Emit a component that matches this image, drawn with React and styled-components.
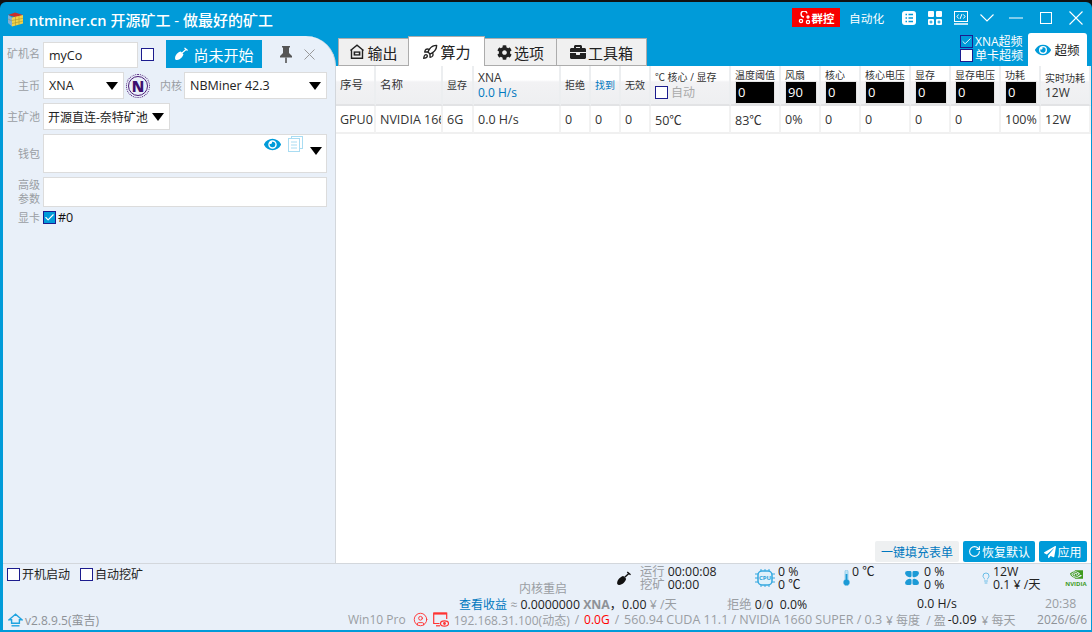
import React from "react";
import styled, { createGlobalStyle } from "styled-components";
import { Rocket, RotateCw, Lightbulb, CircleUser, Check } from "lucide-react";
import { FaCog, FaBriefcase, FaPaperPlane, FaEye } from "react-icons/fa";
import { SiNvidia } from "react-icons/si";

const BLUE = "#009bd9";

const GlobalStyle = createGlobalStyle`
  html, body { margin: 0; padding: 0; background: #111; overflow: hidden; }
  body {
    font-family: "Open Sans", "Noto Sans CJK SC", sans-serif;
    font-size: 12.5px;
    color: #222;
  }
  * { box-sizing: border-box; }
`;

const Window = styled.div`
  width: 1092px;
  height: 630px;
  margin-top: 2px;
  padding: 0 1px 2px 0;
  background: ${BLUE};
  border-radius: 6px 6px 0 0;
  display: flex;
  flex-direction: column;
  overflow: hidden;
`;

const TitleBar = styled.div`
  height: 34px;
  display: flex;
  align-items: center;
  padding-left: 8px;
  color: #fff;
  flex: none;
`;

const AppTitle = styled.div`
  font-size: 15px;
  font-weight: 500;
  margin-left: 6px;
`;

const TitleHost = styled.span`
  font-weight: 600;
  font-size: 14.6px;
`;

const TitleActions = styled.div`
  margin-left: auto;
  display: flex;
  align-items: center;
  padding: 0 8px 3px 0;
`;

const GroupBadge = styled.div`
  width: 48px;
  height: 19px;
  background: #f70000;
  color: #fff;
  font-size: 11.5px;
  font-weight: 600;
  display: flex;
  align-items: center;
  justify-content: center;
  gap: 1px;
  margin-right: 9px;
`;

const AutoLink = styled.div`
  font-size: 11.7px;
  color: #fff;
  width: 53px;
`;

const TitleIcon = styled.div`
  display: flex;
  align-items: center;
  margin-right: ${(p) => p.$mr || 0}px;
`;

const Body = styled.div`
  flex: 1;
  min-height: 0;
  display: flex;
  padding-left: 3px;
`;

const LeftPanel = styled.div`
  width: 333px;
  flex: none;
  background: #e9f0f9;
  border-right: 1px solid #d3d7dc;
  border-top-right-radius: 30px;
  padding: 4px 8px 0 0;
  display: flex;
  flex-direction: column;
  gap: 4px;
`;

const FormRow = styled.div`
  display: flex;
  align-items: ${(p) => p.$align || "center"};
  margin-top: ${(p) => p.$mt || 0}px;
`;

const Label = styled.div`
  width: ${(p) => p.$w || 37}px;
  margin-right: ${(p) => p.$mr || 3}px;
  text-align: right;
  color: #9a9ea3;
  font-size: 11px;
  line-height: 14px;
  flex: none;
`;

const TextBox = styled.div`
  background: #fff;
  border: 1px solid #dcdcdc;
  height: ${(p) => p.$h || 27}px;
  width: ${(p) => p.$w}px;
  padding: 0 5px 0 ${(p) => p.$pl || 5}px;
  margin-top: ${(p) => p.$mt || 0}px;
  display: flex;
  align-items: center;
  font-size: ${(p) => p.$size || 12.5}px;
  color: #222;
  white-space: nowrap;
  flex: ${(p) => (p.$grow ? 1 : "none")};
  position: relative;
`;

const Caret = styled.span`
  margin-left: auto;
  width: 0;
  height: 0;
  border-left: 6px solid transparent;
  border-right: 6px solid transparent;
  border-top: 8px solid #000;
  flex: none;
`;

const WalletTools = styled.div`
  position: absolute;
  right: 4px;
  top: 1px;
  display: flex;
  align-items: flex-start;
  gap: 7px;
  color: ${BLUE};
`;

const WalletCaret = styled(Caret)`
  margin-top: 11px;
`;

const Box = styled.span`
  width: 13px;
  height: 13px;
  flex: none;
  display: inline-flex;
  align-items: center;
  justify-content: center;
  border: 1px solid #1c1c8e;
  margin-left: ${(p) => p.$ml || 0}px;
  background: ${(p) => (p.$on ? BLUE : "#fff")};
  color: #fff;
`;

const StartButton = styled.div`
  width: 96px;
  height: 28px;
  margin-left: 12px;
  background: ${BLUE};
  color: #fff;
  font-size: 15px;
  display: flex;
  align-items: center;
  justify-content: center;
  gap: 5px;
`;

const PanelIcon = styled.div`
  display: flex;
  align-items: center;
  margin-left: ${(p) => p.$ml}px;
`;

const CoinBadge = styled.div`
  width: 24px;
  height: 24px;
  margin: 0 10px 0 2px;
  border-radius: 50%;
  border: 1px dotted #4b1a78;
  outline: 1px solid #4b1a78;
  outline-offset: -3px;
  color: #3d0f6e;
  font-weight: 800;
  font-size: 15px;
  display: flex;
  align-items: center;
  justify-content: center;
  flex: none;
`;

const CardTag = styled.div`
  font-size: 12.5px;
  margin-left: 2px;
  color: #111;
`;

const Main = styled.div`
  flex: 1;
  min-width: 0;
  display: flex;
  flex-direction: column;
`;

const TabStrip = styled.div`
  height: 30px;
  flex: none;
  display: flex;
  align-items: flex-end;
  padding-left: 2px;
`;

const Tab = styled.div`
  width: ${(p) => p.$w}px;
  height: ${(p) => (p.$active ? 30 : 28)}px;
  background: ${(p) => (p.$active ? "#fff" : "#f0f0f0")};
  border: 1px solid #acacac;
  border-bottom: ${(p) => (p.$active ? "none" : "1px solid #acacac")};
  margin-left: ${(p) => (p.$first ? 0 : -1)}px;
  position: relative;
  z-index: ${(p) => (p.$active ? 1 : 0)};
  display: flex;
  align-items: center;
  justify-content: center;
  gap: 2px;
  font-size: 15px;
  color: #222;
`;

const OcGroup = styled.div`
  margin-left: auto;
  align-self: flex-end;
  display: flex;
  align-items: flex-end;
  padding-right: 4px;
`;

const OcChecks = styled.div`
  display: flex;
  flex-direction: column;
  gap: 1px;
  margin-right: 5px;
  padding-bottom: 4px;
  color: #fff;
  font-size: 12px;
`;

const OcCheck = styled.div`
  display: flex;
  align-items: center;
  gap: 2px;
  height: 13px;
  line-height: 13px;
  white-space: nowrap;
`;

const OcTab = styled.div`
  width: 59px;
  height: 33px;
  background: #fff;
  border-radius: 3px 3px 0 0;
  display: flex;
  align-items: center;
  justify-content: center;
  gap: 3px;
  font-size: 12.5px;
  color: ${BLUE};
`;

const OcTabText = styled.span`
  color: #222;
`;

const Content = styled.div`
  flex: 1;
  min-height: 0;
  background: #fff;
  display: flex;
  flex-direction: column;
`;

const Grid = styled.div`
  display: grid;
  grid-template-columns: 40px 67px 31px 87px 30px 30px 30px 80px 50px 40px 40px 50px 40px 50px 40px 50px;
`;

const HeadCell = styled.div`
  height: 40px;
  padding-left: 4px;
  border-right: 2px solid #eceef0;
  border-bottom: 2px solid #e2e3e5;
  background: linear-gradient(#fff 0 14px, #f2f2f4 16px, #eeeff1 100%);
  display: flex;
  flex-direction: column;
  justify-content: ${(p) => p.$justify || "center"};
  font-size: ${(p) => p.$size || 10}px;
  line-height: 14px;
  color: ${(p) => p.$color || "#333"};
  white-space: nowrap;
  overflow: hidden;
`;

const TuneName = styled.span`
  margin-top: 3px;
  line-height: 12px;
`;

const HashLabel = styled.div`
  font-size: 12px;
  line-height: 15px;
  color: ${(p) => p.$color || "#333"};
`;

const AutoRow = styled.div`
  display: flex;
  align-items: center;
  gap: 3px;
  color: #aaa;
  font-size: 12px;
  line-height: 15px;
  margin-top: 1px;
`;

const HeadInput = styled.div`
  width: ${(p) => p.$w}px;
  height: 21px;
  margin: 1px 0 0 1px;
  background: #000;
  color: #fff;
  border: 1px solid #000;
  outline: 1px solid #e4e4e4;
  font-size: 13px;
  line-height: 19px;
  padding-left: 1px;
`;

const DataCell = styled.div`
  height: 28px;
  padding-left: 4px;
  border-right: 2px solid #f2f2f2;
  border-bottom: 2px solid #f0f0f0;
  display: flex;
  align-items: center;
  font-size: 12.5px;
  color: #333;
  white-space: nowrap;
  overflow: hidden;
`;

const ActionBar = styled.div`
  margin-top: auto;
  height: 22px;
  padding-right: 4px;
  display: flex;
  justify-content: flex-end;
  align-items: flex-start;
  gap: 4px;
`;

const FillButton = styled.div`
  width: 84px;
  height: 21px;
  background: #eef0f1;
  color: #0078bf;
  font-size: 12px;
  border-radius: 2px;
  display: flex;
  align-items: center;
  justify-content: center;
`;

const ActionButton = styled.div`
  width: ${(p) => p.$w}px;
  height: 21px;
  background: ${BLUE};
  color: #fff;
  font-size: 12px;
  border-radius: 2px;
  display: flex;
  align-items: center;
  justify-content: center;
  gap: 1px;
`;

const Footer = styled.div`
  height: 67px;
  flex: none;
  margin-left: 3px;
  background: #e9f0f9;
  border-top: 1px solid #d3d7dc;
  display: flex;
  flex-direction: column;
`;

const FooterTop = styled.div`
  height: 32px;
  flex: none;
  display: flex;
`;

const StartChecks = styled.div`
  width: 516px;
  padding: 3px 0 0 4px;
  display: flex;
  gap: 10px;
  flex: none;
`;

const CheckItem = styled.div`
  display: flex;
  align-items: center;
  gap: 2px;
  font-size: 12px;
  height: 14px;
  color: #222;
`;

const RestartNote = styled.div`
  width: 96px;
  flex: none;
  align-self: flex-end;
  color: #9a9ea3;
  font-size: 12px;
  line-height: 15px;
`;

const Stat = styled.div`
  width: ${(p) => p.$w}px;
  flex: none;
  display: flex;
  align-items: flex-start;
  gap: ${(p) => p.$gap || 3}px;
  padding-top: 1px;
`;

const StatIcon = styled.div`
  width: ${(p) => p.$w}px;
  height: 26px;
  flex: none;
  display: flex;
  align-items: center;
  justify-content: center;
  color: ${(p) => p.$color || "#35a8e0"};
`;

const StatText = styled.div`
  font-size: 12.3px;
  line-height: 13px;
  color: #222;
  white-space: nowrap;
`;

const Muted = styled.span`
  color: #9a9ea3;
`;

const NvidiaMark = styled.div`
  width: 20px;
  display: flex;
  flex-direction: column;
  align-items: center;
  color: #3f9b1f;
  font-size: 6px;
  font-weight: 700;
  line-height: 7px;
  padding-top: 4px;
`;

const FooterLine = styled.div`
  height: ${(p) => p.$h}px;
  flex: none;
  display: flex;
  align-items: center;
  font-size: 12.3px;
  white-space: nowrap;
`;

const Cell = styled.div`
  width: ${(p) => p.$w}px;
  flex: none;
`;

const LinkText = styled.span`
  color: #0078bf;
  font-size: 12px;
`;

const Strong = styled.span`
  font-weight: 700;
  color: #8e9297;
`;

const Version = styled.div`
  width: 345px;
  flex: none;
  display: flex;
  align-items: center;
  gap: 2px;
  padding-left: 5px;
  color: #8e9297;
  font-size: 12px;
`;

const SysLine = styled.div`
  display: flex;
  align-items: center;
  flex: 1;
  color: #9a9ea3;
  font-size: 12px;
`;

const SysIcon = styled.span`
  display: inline-flex;
  margin: 0 ${(p) => p.$mr || 0}px 0 ${(p) => p.$ml || 0}px;
`;

const Sep = styled.span`
  margin: 0 5px;
`;

const GpuInfo = styled.span`
  font-size: 12.5px;
  margin-right: 4px;
`;

const Red = styled.span`
  color: #f00;
`;

const Dark = styled.span`
  color: #222;
  margin: 0 5px 0 2px;
  font-size: 12.5px;
`;

const DateText = styled.div`
  color: #8e9297;
  margin-left: auto;
  padding-right: 4px;
`;

const CubeLogo = () => (
  <svg width="15" height="15" viewBox="0 0 15 15">
    <path d="M0 3 7 .5 15 3 9 5.5z" fill="#c8302c" />
    <path d="M0 3l4 2.5v9L0 11z" fill="#7fb0d8" />
    <path d="M4 5.5 15 3v8.5L4 14.5z" fill="#efd24a" />
    <path d="M7.5 5v9M11 4v8.5M4 8.5l11-2.2M4 11.5l11-2.4M0 7l4 2" stroke="#a58a2a" strokeWidth=".5" fill="none" />
  </svg>
);

const ShovelIcon = ({ size = 14, color = "#fff" }) => (
  <svg width={size} height={size} viewBox="0 0 16 16">
    <path d="M14 2.5 9 7M12 1l3.5 3" stroke={color} strokeWidth="1.5" />
    <path d="M7.8 5.2 10.8 8.2C10 11.5 7 14.5 3.5 14.8 2 15 1 14 1.2 12.5 1.5 9 4.5 6 7.8 5.2Z" fill={color} />
  </svg>
);

const OutputIcon = () => (
  <svg width="16" height="16" viewBox="0 0 16 16" fill="none" stroke="#222" strokeWidth="1.4">
    <path d="M1.5 6.5 8 1.2l6.5 5.3" />
    <path d="M2.5 5.5v8.8h11V5.5" />
    <rect x="4.6" y="7.4" width="6.8" height="4.2" fill="#222" stroke="none" />
    <path d="M6.2 9.5h3.6" stroke="#f0f0f0" />
  </svg>
);

const ListIcon = () => (
  <svg width="14" height="14" viewBox="0 0 14 14">
    <rect width="14" height="14" rx="3" fill="#fff" />
    <path d="M3.5 3.5H5M6.5 3.5h4.5M3.5 7H5M6.5 7h4.5M3.5 10.5H5M6.5 10.5h4.5" stroke={BLUE} strokeWidth="1.4" />
  </svg>
);

const TilesIcon = () => (
  <svg width="14" height="14" viewBox="0 0 14 14" fill="#fff">
    <rect width="6" height="6" rx="1" />
    <rect x="8" width="6" height="6" rx="1" />
    <rect y="8" width="6" height="6" rx="1" />
    <rect x="8" y="8" width="6" height="6" rx="1" />
    <path d="M1.5 11h3M3 9.5v3M9.5 11h3M11 9.5v3" stroke={BLUE} />
  </svg>
);

const CodeIcon = () => (
  <svg width="14" height="14" viewBox="0 0 14 14" fill="none" stroke="#fff">
    <rect x=".5" y=".5" width="13" height="10" />
    <path d="M0 13h14" strokeWidth="1.4" />
    <path d="M4.5 3.5 3 5.5l1.5 2M9.5 3.5 11 5.5l-1.5 2M8 3 6 8" />
  </svg>
);

const WindowGlyph = ({ w, d }) => (
  <svg width={w} height="14" viewBox={`0 0 ${w} 14`} fill="none" stroke="#fff" strokeWidth="1.1">
    <path d={d} />
  </svg>
);

const GroupMark = () => (
  <svg width="13" height="14" viewBox="0 0 13 14" fill="none" stroke="#fff" strokeWidth="1.3">
    <path d="M9 2.5A3 3 0 1 0 6 6" />
    <circle cx="10" cy="6" r="1" />
    <circle cx="3" cy="10" r="1.6" />
    <circle cx="10" cy="11" r="1.6" />
  </svg>
);

const PinIcon = () => (
  <svg width="12" height="17" viewBox="0 0 12 17" fill="#555">
    <path d="M2 0h8v1.5H9V7l3 3v1.5H0V10l3-3V1.5H2z" />
    <path d="M5.2 11.5h1.6V17H5.2z" />
  </svg>
);

const CloseGlyph = () => (
  <svg width="11" height="11" viewBox="0 0 11 11" stroke="#999" strokeWidth="1">
    <path d="M.5.5l10 10M10.5.5l-10 10" />
  </svg>
);

const CopyIcon = () => (
  <svg width="15" height="16" viewBox="0 0 15 16" fill="#fff" stroke="#a9dcf2">
    <rect x="3.5" y=".5" width="11" height="12" />
    <rect x=".5" y="2.5" width="11" height="13" />
    <path d="M3 6h6M3 9h6M3 12h6" />
  </svg>
);

const HomeIcon = () => (
  <svg width="15" height="14" viewBox="0 0 15 14" fill="none" stroke="#1fa3e0" strokeWidth="1.4">
    <path d="M7.5 1.2 1 6.8h2.6v3.4h7.8V6.8H14z" />
    <path d="M3.5 12.8h8" />
  </svg>
);

const CpuIcon = () => (
  <svg width="20" height="20" viewBox="0 0 20 20" fill="#dff1fb" stroke="#35a8e0">
    <rect x="3" y="3" width="14" height="14" rx="4" strokeWidth="1.5" />
    <path d="M6 1v2M10 1v2M14 1v2M6 17v2M10 17v2M14 17v2M0 6h3M0 10h3M0 14h3M17 6h3M17 10h3M17 14h3" />
    <text x="10" y="12.2" fontSize="6" fontWeight="700" textAnchor="middle" fill="#2a9fd8" stroke="none">CPU</text>
  </svg>
);

const ThermoIcon = () => (
  <svg width="7" height="16" viewBox="0 0 7 16">
    <path d="M2 1.5a1.5 1.5 0 0 1 3 0V9.6a3.2 3.2 0 1 1-3 0z" fill="#bfe3f5" stroke="#7cc6ea" strokeWidth=".7" />
    <circle cx="3.5" cy="12.4" r="2.8" fill="#1c9ad6" />
    <path d="M3.5 4v8" stroke="#1c9ad6" strokeWidth="1.8" />
  </svg>
);

const FanIcon = () => (
  <svg width="14" height="14" viewBox="0 0 15 15" fill="#1c9ad6">
    <path d="M0 2.5Q0 0 2.5 0H5.5Q7 0 7 1.5V5Q7 7 5 6.8 1 6.4 0 2.5Z" />
    <path d="M15 2.5Q15 0 12.5 0H9.5Q8 0 8 1.5V5Q8 7 10 6.8 14 6.4 15 2.5Z" />
    <path d="M0 12.5Q0 15 2.5 15H5.5Q7 15 7 13.5V10Q7 8 5 8.2 1 8.6 0 12.5Z" />
    <path d="M15 12.5Q15 15 12.5 15H9.5Q8 15 8 13.5V10Q8 8 10 8.2 14 8.6 15 12.5Z" />
  </svg>
);

const ScreenEyeIcon = () => (
  <svg width="16" height="15" viewBox="0 0 16 15" fill="none" stroke="#f33" strokeWidth="1.2">
    <path d="M6.5 11.5H.7V1h13v6" />
    <path d="M.7 1.6h13" strokeWidth="2" />
    <path d="M3 13.8h4" />
    <ellipse cx="11.5" cy="11.5" rx="4" ry="2.6" />
    <circle cx="11.5" cy="11.5" r=".8" fill="#f33" />
  </svg>
);

const headers = [
  { key: "no", text: "序号", size: 11.5 },
  { key: "name", text: "名称", size: 11.5 },
  { key: "mem", text: "显存" },
  { key: "xna" },
  { key: "rej", text: "拒绝" },
  { key: "found", text: "找到", color: "#0078bf" },
  { key: "bad", text: "无效" },
  { key: "temp" },
];

const tunings = [
  ["温度阈值", "0", 38],
  ["风扇", "90", 30],
  ["核心", "0", 30],
  ["核心电压", "0", 38],
  ["显存", "0", 30],
  ["显存电压", "0", 38],
  ["功耗", "0", 30],
];

const rowValues = ["GPU0", "NVIDIA 1660 SUPER", "6G", "0.0 H/s", "0", "0", "0", "50℃", "83℃", "0%", "0", "0", "0", "0", "100%", "12W"];

const App = () => (
  <>
    <GlobalStyle />
    <Window>
      <TitleBar>
        <CubeLogo />
        <AppTitle><TitleHost>ntminer.cn</TitleHost> 开源矿工 - 做最好的矿工</AppTitle>
        <TitleActions>
          <GroupBadge>
            <GroupMark />
            群控
          </GroupBadge>
          <AutoLink>自动化</AutoLink>
          <TitleIcon $mr={12}><ListIcon /></TitleIcon>
          <TitleIcon $mr={12}><TilesIcon /></TitleIcon>
          <TitleIcon $mr={12}><CodeIcon /></TitleIcon>
          <TitleIcon $mr={15}><WindowGlyph w={14} d="M.5 3.5 7 10l6.5-6.5" /></TitleIcon>
          <TitleIcon $mr={17}><WindowGlyph w={14} d="M0 7h14" /></TitleIcon>
          <TitleIcon $mr={17}><WindowGlyph w={12} d="M.5 1.5h11v11H.5z" /></TitleIcon>
          <TitleIcon><WindowGlyph w={14} d="M.5.5l13 13M13.5.5l-13 13" /></TitleIcon>
        </TitleActions>
      </TitleBar>
      <Body>
        <LeftPanel>
          <FormRow>
            <Label>矿机名</Label>
            <TextBox $w={95} $h={26} $pl={5} $mt={2}>myCo</TextBox>
            <Box $ml={3} />
            <StartButton>
              <ShovelIcon />
              尚未开始
            </StartButton>
            <PanelIcon $ml={18}><PinIcon /></PanelIcon>
            <PanelIcon $ml={12}><CloseGlyph /></PanelIcon>
          </FormRow>
          <FormRow>
            <Label>主币</Label>
            <TextBox $w={81}>XNA<Caret /></TextBox>
            <CoinBadge>N</CoinBadge>
            <Label $w={22} $mr={2}>内核</Label>
            <TextBox $grow>NBMiner 42.3<Caret /></TextBox>
          </FormRow>
          <FormRow>
            <Label>主矿池</Label>
            <TextBox $w={127} $pl={4} $size={12}>开源直连-奈特矿池<Caret /></TextBox>
          </FormRow>
          <FormRow>
            <Label>钱包</Label>
            <TextBox $grow $h={39}>
              <WalletTools>
                <FaEye size={17} />
                <CopyIcon />
                <WalletCaret />
              </WalletTools>
            </TextBox>
          </FormRow>
          <FormRow>
            <Label>高级<br />参数</Label>
            <TextBox $grow $h={30} />
          </FormRow>
          <FormRow $mt={-2}>
            <Label>显卡</Label>
            <Box $on><Check size={11} strokeWidth={2.5} /></Box>
            <CardTag>#0</CardTag>
          </FormRow>
        </LeftPanel>
        <Main>
          <TabStrip>
            <Tab $first $w={71}><OutputIcon />输出</Tab>
            <Tab $active $w={77}><Rocket size={16} />算力</Tab>
            <Tab $w={73}><FaCog size={15} />选项</Tab>
            <Tab $w={91}><FaBriefcase size={16} />工具箱</Tab>
            <OcGroup>
              <OcChecks>
                <OcCheck>
                  <Box $on><Check size={11} strokeWidth={2} /></Box>XNA超频
                </OcCheck>
                <OcCheck>
                  <Box />单卡超频
                </OcCheck>
              </OcChecks>
              <OcTab>
                <FaEye size={16} />
                <OcTabText>超频</OcTabText>
              </OcTab>
            </OcGroup>
          </TabStrip>
          <Content>
            <Grid>
              {headers.map((h) => {
                if (h.key === "xna") {
                  return (
                    <HeadCell key={h.key}>
                      <HashLabel>XNA</HashLabel>
                      <HashLabel $color="#0078bf">0.0 H/s</HashLabel>
                    </HeadCell>
                  );
                }
                if (h.key === "temp") {
                  return (
                    <HeadCell key={h.key}>
                      ℃ 核心 / 显存
                      <AutoRow><Box />自动</AutoRow>
                    </HeadCell>
                  );
                }
                return (
                  <HeadCell key={h.key} $size={h.size} $color={h.color}>
                    {h.text}
                  </HeadCell>
                );
              })}
              {tunings.map(([name, value, width]) => (
                <HeadCell key={name} $justify="flex-start">
                  <TuneName>{name}</TuneName>
                  <HeadInput $w={width}>{value}</HeadInput>
                </HeadCell>
              ))}
              <HeadCell>
                实时功耗
                <HashLabel>12W</HashLabel>
              </HeadCell>
              {rowValues.map((v, i) => (
                <DataCell key={i}>{v}</DataCell>
              ))}
            </Grid>
            <ActionBar>
              <FillButton>一键填充表单</FillButton>
              <ActionButton $w={72}><RotateCw size={13} strokeWidth={2} />恢复默认</ActionButton>
              <ActionButton $w={48}><FaPaperPlane size={12} />应用</ActionButton>
            </ActionBar>
          </Content>
        </Main>
      </Body>
      <Footer>
        <FooterTop>
          <StartChecks>
            <CheckItem><Box />开机启动</CheckItem>
            <CheckItem><Box />自动挖矿</CheckItem>
          </StartChecks>
          <RestartNote>内核重启</RestartNote>
          <Stat $w={139} $gap={9}>
            <StatIcon $w={16} $color="#111"><ShovelIcon size={15} color="#111" /></StatIcon>
            <StatText>
              <div><Muted>运行</Muted> 00:00:08</div>
              <div><Muted>挖矿</Muted> 00:00</div>
            </StatText>
          </Stat>
          <Stat $w={89}>
            <StatIcon $w={21}><CpuIcon /></StatIcon>
            <StatText>0 %<br />0 ℃</StatText>
          </Stat>
          <Stat $w={62} $gap={2}>
            <StatIcon $w={7}><ThermoIcon /></StatIcon>
            <StatText>0 ℃</StatText>
          </Stat>
          <Stat $w={75} $gap={5}>
            <StatIcon $w={14}><FanIcon /></StatIcon>
            <StatText>0 %<br />0 %</StatText>
          </Stat>
          <Stat $w={86} $gap={1}>
            <StatIcon $w={12}><Lightbulb size={16} strokeWidth={1.4} /></StatIcon>
            <StatText>12W<br />0.1 ¥ /天</StatText>
          </Stat>
          <NvidiaMark>
            <SiNvidia size={13} />
            NVIDIA
          </NvidiaMark>
        </FooterTop>
        <FooterLine $h={15}>
          <Cell $w={456} />
          <Cell $w={268}>
            <LinkText>查看收益</LinkText> <Muted>≈</Muted> 0.0000000 <Strong>XNA</Strong>，0.00 <Muted>¥</Muted> <Muted>/天</Muted>
          </Cell>
          <Cell $w={190}>
            <Muted>拒绝</Muted> 0<Muted>/</Muted>0&nbsp; 0.0%
          </Cell>
          <Cell $w={128}>0.0 H/s</Cell>
          <Cell $w={44}><Muted>20:38</Muted></Cell>
        </FooterLine>
        <FooterLine $h={17}>
          <Version>
            <HomeIcon />
            v2.8.9.5(蛮吉)
          </Version>
          <SysLine>
            Win10 Pro
            <SysIcon $ml={7}><CircleUser size={15} color="#f33" strokeWidth={1.5} /></SysIcon>
            <SysIcon $ml={5} $mr={5}><ScreenEyeIcon /></SysIcon>
            192.168.31.100(动态)
            <Sep>/</Sep>
            <Red>0.0G</Red>
            <Sep>/</Sep>
            <GpuInfo>560.94 CUDA 11.1 / NVIDIA 1660 SUPER / 0.3</GpuInfo>
            ¥ 每度 &nbsp;/ 盈
            <Dark>-0.09</Dark>
            ¥ 每天
            <DateText>2026/6/6</DateText>
          </SysLine>
        </FooterLine>
      </Footer>
    </Window>
  </>
);

export default App;
